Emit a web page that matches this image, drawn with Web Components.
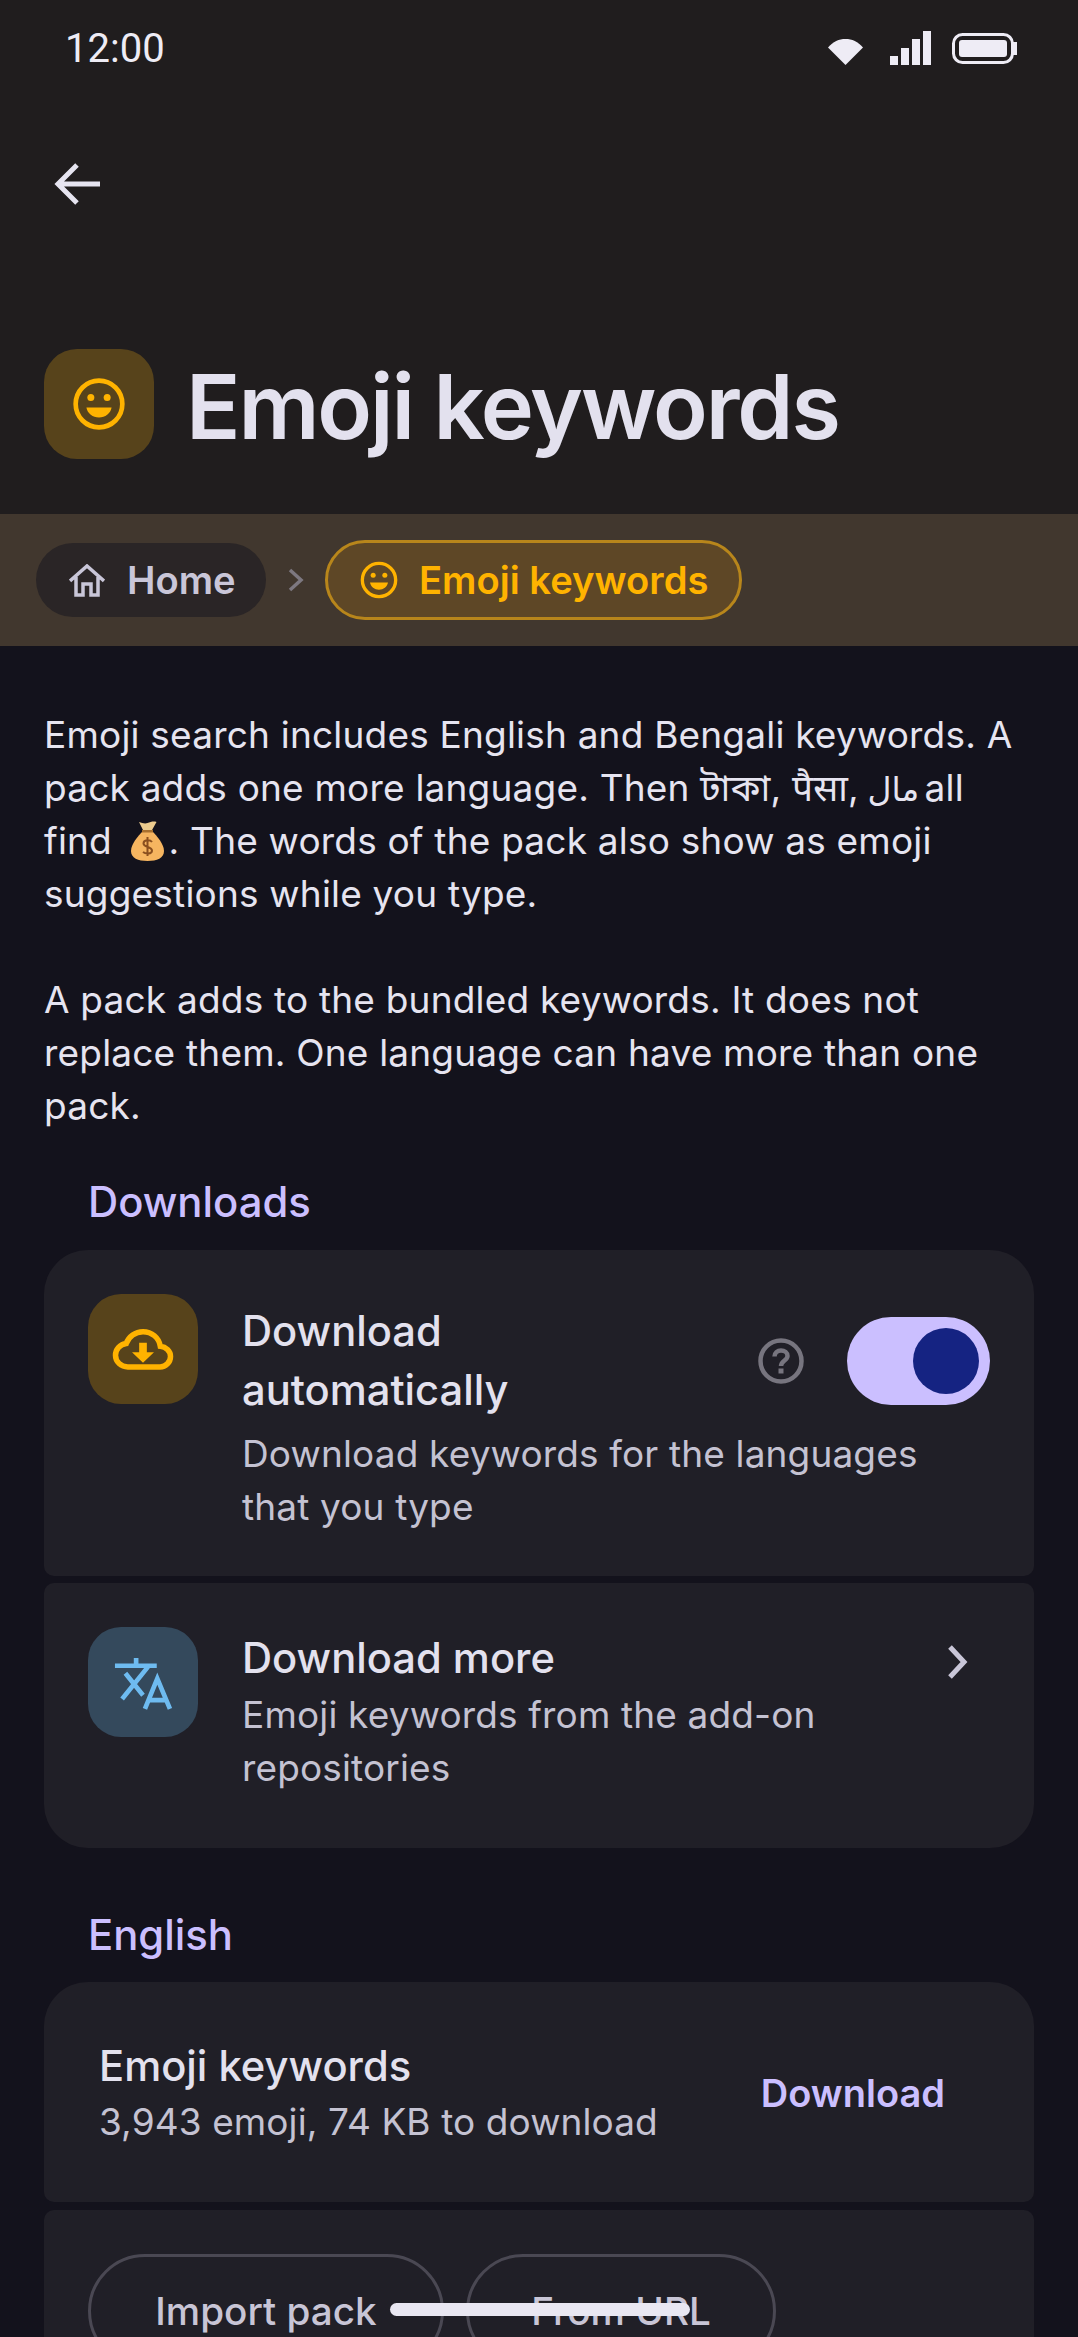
<!DOCTYPE html>
<html lang="en">
<head>
<meta charset="utf-8">
<title>Emoji keywords</title>
<style>
html, body { margin: 0; height: 2337px; overflow: hidden; background: #13121c; }
body { font-family: Inter, "Noto Sans", sans-serif; color: #e6e4f0; position: relative; }
intro-text span { line-height: 1; }
.ar { font-size: 33px; margin: 0 -5px 0 -2px; }
</style>
</head>
<body>
<app-header>
  <status-bar></status-bar>
</app-header>
<crumb-bar></crumb-bar>
<intro-text>Emoji search includes English and Bengali keywords. A
pack adds one more language. Then <span>টাকা</span>, <span>पैसा</span>, <span class="ar" dir="rtl">مال</span> all
find <money-bag></money-bag>. The words of the pack also show as emoji
suggestions while you type.

A pack adds to the bundled keywords. It does not
replace them. One language can have more than one
pack.</intro-text>

<section-title style="margin-top:41px">Downloads</section-title>
<set-card pos="first" style="margin-top:19px">
  <set-row title="Download automatically" sub="Download keywords for the languages that you type" tint="amber" icon="cloud" toggle></set-row>
</set-card>
<set-card pos="last" style="margin-top:7px">
  <set-row title="Download more" sub="Emoji keywords from the add-on repositories" tint="blue" icon="translate" chevron></set-row>
</set-card>

<section-title style="margin-top:58px">English</section-title>
<set-card pos="first" style="margin-top:18px">
  <pack-row name="Emoji keywords" info="3,943 emoji, 74 KB to download" action="Download"></pack-row>
</set-card>
<set-card pos="last" style="margin-top:8px">
  <btn-row></btn-row>
</set-card>
<home-indicator></home-indicator>

<script>
const SMILE = `<svg viewBox="0 0 24 24" fill="currentColor" style="display:block;width:100%;height:100%"><circle cx="12" cy="12" r="10" fill="none" stroke="currentColor" stroke-width="2"/><circle cx="8.5" cy="9.2" r="1.5"/><circle cx="15.5" cy="9.2" r="1.5"/><path d="M6.600 13.500h10.800c-.5 2.600-2.700 4.300-5.400 4.300s-4.900-1.700-5.400-4.300z"/></svg>`

const ICONS = {
    cloud: `<svg viewBox="0 0 24 24" fill="none" stroke="currentColor" stroke-width="2"><path d="M6.500 18.500C4 18.500 2 16.700 2 14.300c0-2.200 1.700-4 3.900-4.300C6.800 7.500 9.200 5.700 12 5.700c3.200 0 5.800 2.200 6.300 5.300 2 .2 3.700 1.600 3.700 3.700 0 2.100-1.700 3.800-3.800 3.800z"/><path fill="currentColor" stroke="none" d="M10.600 9.700h2.800v3.500h2.600L12 17l-4-3.800h2.600z"/></svg>`,
    translate: `<svg viewBox="0 0 24 24" fill="none" stroke="currentColor" stroke-width="1.700"><path d="M1.800 6.100H17M9.500 3.300v2.800M13.800 6.500 4.400 18.200M5.600 8.800l6.400 8"/><path d="M12.700 21.800 17.200 10.800l4.600 11M14.300 18.600h6"/></svg>`
}

class AppHeader extends HTMLElement {
    constructor() {
        super()
        this.attachShadow({mode: 'open'})
        this.shadowRoot.innerHTML = `
        <style>
        :host { display: block; height: 514px; background: #201d1e; }
        .back { display: block; width: 60px; height: 60px; margin: 58px 0 0 47px; color: #e6e4f0; }
        .head { display: flex; align-items: center; gap: 32px; margin: 135px 0 0 44px; }
        .box { width: 110px; height: 110px; border-radius: 33px; background: #57431b; color: #ffb300; display: flex; align-items: center; justify-content: center; }
        .box span { width: 56px; height: 56px; }
        h1 { margin: 0; padding-top: 5px; font: 600 90px/105px Inter, sans-serif; letter-spacing: -2.1px; color: #e3e1ee; }
        </style>
        <slot></slot>
        <svg class="back" viewBox="0 0 60 60" fill="none" stroke="currentColor" stroke-width="5"><path d="M53 30H12M30 11 11 30l19 19"/></svg>
        <div class="head">
            <div class="box"><span>${SMILE}</span></div>
            <h1>Emoji keywords</h1>
        </div>`
    }
}
customElements.define('app-header', AppHeader)

class StatusBar extends HTMLElement {
    constructor() {
        super()
        this.attachShadow({mode: 'open'})
        this.shadowRoot.innerHTML = `
        <style>
        :host { display: flex; align-items: center; justify-content: space-between; height: 96px; padding: 0 61px 0 65px; font: 400 40px Roboto, sans-serif; color: #eeecf5; }
        .icons { display: flex; align-items: center; }
        svg { display: block; fill: currentColor; }
        </style>
        <span>12:00</span>
        <div class="icons">
            <svg style="margin-top:8px" width="35" height="26" viewBox="0 0 35 26"><path d="M0 8.500C5 2.500 11 0 17.500 0S30 2.500 35 8.500L17.500 26z"/></svg>
            <svg style="margin-left:27px" width="41" height="34" viewBox="0 0 41 34"><rect y="25" width="8" height="9"/><rect x="11" y="17" width="8" height="17"/><rect x="22" y="8" width="8" height="26"/><rect x="33" y="0" width="8" height="34"/></svg>
            <svg style="margin-left:21px" width="65" height="31" viewBox="0 0 65 31"><rect x="1.500" y="1.500" width="59" height="28" rx="9" fill="none" stroke="currentColor" stroke-width="3"/><rect x="7" y="7" width="48" height="17" rx="3"/><rect x="61" y="9" width="4" height="13"/></svg>
        </div>`
    }
}
customElements.define('status-bar', StatusBar)

class CrumbBar extends HTMLElement {
    constructor() {
        super()
        this.attachShadow({mode: 'open'})
        this.shadowRoot.innerHTML = `
        <style>
        :host { display: flex; align-items: center; height: 132px; padding-left: 36px; background: #41372e; font: 600 38.200px Inter, sans-serif; }
        .pill { display: flex; align-items: center; box-sizing: border-box; border-radius: 40px; }
        .home { width: 230px; height: 74px; padding-left: 33px; gap: 22px; background: #2a2526; color: #c9c6d8; }
        .on { width: 417px; height: 80px; padding-left: 31px; gap: 20px; background: #5e4726; border: 3px solid #b8861b; color: #ffb300; }
        .sep { width: 59px; display: flex; justify-content: center; color: #7d7880; }
        .ico { width: 40px; height: 40px; }
        svg { display: block; }
        </style>
        <div class="pill home">
            <svg width="36" height="33" viewBox="0 0 36 33" fill="none" stroke="currentColor" stroke-width="3.500"><path d="M1 17 18 2l17 15M7 13v18h7V20h8v11h7V13"/></svg>
            <span>Home</span>
        </div>
        <div class="sep"><svg width="16" height="24" viewBox="0 0 16 24" fill="none" stroke="currentColor" stroke-width="3.500"><path d="M2 2l11 10L2 22"/></svg></div>
        <div class="pill on">
            <span class="ico">${SMILE}</span>
            <span>Emoji keywords</span>
        </div>`
    }
}
customElements.define('crumb-bar', CrumbBar)

class IntroText extends HTMLElement {
    constructor() {
        super()
        this.attachShadow({mode: 'open'})
        this.shadowRoot.innerHTML = `
        <style>
        :host { display: block; margin: 62px 0 0 44px; font: 400 37px/53px Inter, "Noto Sans Bengali", "Noto Sans Devanagari", "DejaVu Sans", sans-serif; letter-spacing: .2px; color: #e6e4f0; }
        div { white-space: pre-line; }
        </style>
        <div><slot></slot></div>`
    }
}
customElements.define('intro-text', IntroText)

class MoneyBag extends HTMLElement {
    constructor() {
        super()
        this.attachShadow({mode: 'open'})
        this.shadowRoot.innerHTML = `
        <style>
        :host { display: inline-block; width: 33px; height: 40px; margin: -6px 5px -4px 8px; vertical-align: -3px; white-space: normal; line-height: 0; }
        svg { display: block; }
        </style>
        <svg width="33" height="40" viewBox="0 0 33 40"><path fill="#eccb8e" d="M8 1c3 1 6 2 8.500 1 3-1 6-2 9-1l-5 9h-8z"/><path fill="#f6b560" d="M12 10h9c5 5 12 13 12 20 0 7-7 10-16.500 10S0 37 0 30C0 23 7 15 12 10z"/><rect x="11" y="9" width="11" height="2.500" fill="#a9712f"/><path fill="none" stroke="#8a4f1f" stroke-width="2" d="M21 21c-2-2.500-8.500-2.500-8.500 1.500s8.500 3 8.500 7-6.500 3.500-9 1.500M16.500 16v19"/></svg>`
    }
}
customElements.define('money-bag', MoneyBag)

class SectionTitle extends HTMLElement {
    constructor() {
        super()
        this.attachShadow({mode: 'open'})
        this.shadowRoot.innerHTML = `
        <style>
        :host { display: block; padding-left: 88px; font: 500 41.800px/58px Inter, sans-serif; color: #cbbfff; }
        </style>
        <slot></slot>`
    }
}
customElements.define('section-title', SectionTitle)

class SetCard extends HTMLElement {
    constructor() {
        super()
        this.attachShadow({mode: 'open'})
        this.shadowRoot.innerHTML = `
        <style>
        :host { display: block; margin: 0 44px; background: #201f27; overflow: hidden; }
        :host([pos=first]) { border-radius: 44px 44px 10px 10px; }
        :host([pos=last]) { border-radius: 10px 10px 44px 44px; }
        </style>
        <slot></slot>`
    }
}
customElements.define('set-card', SetCard)

class SetRow extends HTMLElement {
    constructor() {
        super()
        const tints = {amber: ['#57431b', '#ffb300'], blue: ['#34495c', '#6ebbf0']}
        const [bg, fg] = tints[this.getAttribute('tint')]
        const hasToggle = this.hasAttribute('toggle')
        this.attachShadow({mode: 'open'})
        let right = ''
        if (hasToggle) {
            right = `<svg class="help" width="46" height="46" viewBox="0 0 46 46" fill="none" stroke="#77757f" stroke-width="4.500"><circle cx="23" cy="23" r="20.500"/><path d="M16.500 18.500c0-3.700 2.900-6 6.500-6s6.500 2.300 6.500 5.500c0 4.500-6.500 4.500-6.500 10"/><rect x="20.500" y="30.500" width="5" height="5" fill="#77757f" stroke="none"/></svg>
            <div class="toggle"><div class="knob"></div></div>`
        }
        if (this.hasAttribute('chevron')) {
            right = `<svg class="chev" width="24" height="36" viewBox="0 0 24 36" fill="none" stroke="#c9c6d8" stroke-width="5"><path d="M4 3l14 15L4 33"/></svg>`
        }
        this.shadowRoot.innerHTML = `
        <style>
        :host { display: flex; padding: 44px 44px ${hasToggle ? 43 : 54}px; }
        .box { flex: none; width: 110px; height: 110px; border-radius: 33px; background: ${bg}; color: ${fg}; display: flex; align-items: center; justify-content: center; }
        .box svg { width: 66px; height: 66px; }
        .txt { flex: 1; margin-left: 44px; min-width: 0; }
        .head { display: flex; align-items: center; padding: ${hasToggle ? '8px 0' : '2px 0 0'}; }
        .t { flex: 1; font: 500 41.700px/58.500px Inter, sans-serif; color: #e3e1ee; }
        :host([toggle]) .t { flex: none; width: 400px; margin-right: auto; }
        .s { font: 400 37px/53px Inter, sans-serif; letter-spacing: .15px; color: #c4c2d2; }
        .help { flex: none; margin-right: 43px; }
        .toggle { flex: none; display: flex; align-items: center; justify-content: flex-end; box-sizing: border-box; width: 143px; height: 88px; padding-right: 11px; border-radius: 44px; background: #cbbfff; }
        .knob { width: 66px; height: 66px; border-radius: 50%; background: #152382; }
        .chev { flex: none; margin: 8px 20px 0 0; }
        </style>
        <div class="box">${ICONS[this.getAttribute('icon')]}</div>
        <div class="txt">
            <div class="head">
                <div class="t">${this.getAttribute('title')}</div>
                ${right}
            </div>
            <div class="s">${this.getAttribute('sub')}</div>
        </div>`
    }
}
customElements.define('set-row', SetRow)

class PackRow extends HTMLElement {
    constructor() {
        super()
        this.attachShadow({mode: 'open'})
        this.shadowRoot.innerHTML = `
        <style>
        :host { display: flex; align-items: center; justify-content: space-between; height: 220px; padding: 2px 89px 0 55px; box-sizing: border-box; }
        .t { font: 500 41.700px/58px Inter, sans-serif; color: #e3e1ee; }
        .s { font: 400 37px/53px Inter, sans-serif; letter-spacing: .1px; color: #c4c2d2; }
        .a { font: 600 38px Inter, sans-serif; color: #cbbfff; }
        </style>
        <div>
            <div class="t">${this.getAttribute('name')}</div>
            <div class="s">${this.getAttribute('info')}</div>
        </div>
        <div class="a">${this.getAttribute('action')}</div>`
    }
}
customElements.define('pack-row', PackRow)

class BtnRow extends HTMLElement {
    constructor() {
        super()
        this.attachShadow({mode: 'open'})
        this.shadowRoot.innerHTML = `
        <style>
        :host { display: flex; gap: 22px; padding: 44px; }
        .b { box-sizing: border-box; height: 114px; border: 3px solid #4a4853; border-radius: 57px; display: flex; align-items: center; justify-content: center; font: 500 38.700px Inter, sans-serif; color: #c8c5d6; }
        </style>
        <div class="b" style="width:356px">Import pack</div>
        <div class="b" style="width:310px">From URL</div>`
    }
}
customElements.define('btn-row', BtnRow)

class HomeIndicator extends HTMLElement {
    constructor() {
        super()
        this.attachShadow({mode: 'open'})
        this.shadowRoot.innerHTML = `
        <style>
        :host { display: block; position: absolute; left: 390px; top: 2303px; width: 300px; height: 13px; border-radius: 7px; background: #e9e7f2; }
        </style>`
    }
}
customElements.define('home-indicator', HomeIndicator)
</script>
</body>
</html>
